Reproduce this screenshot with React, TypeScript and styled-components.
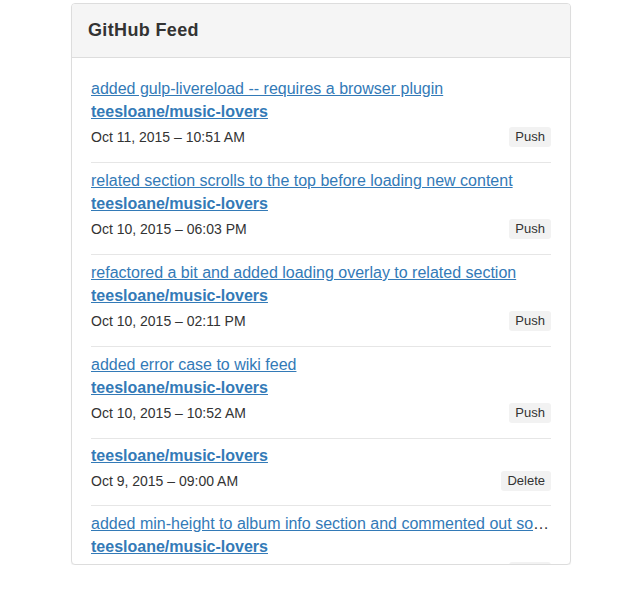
import React from "react";
import styled, { createGlobalStyle } from "styled-components";

const GlobalStyle = createGlobalStyle`
  html, body { margin: 0; padding: 0; background: #fff; }
  body { font-family: "Liberation Sans", Arial, Helvetica, sans-serif; color: #333; }
`;

const Page = styled.div`
  padding: 3px 0 0 71px;
`;

const Panel = styled.section`
  width: 498px;
  height: 560px;
  border: 1px solid #ddd;
  border-radius: 4px;
  background: #fff;
  box-shadow: 0 1px 1px rgba(0, 0, 0, 0.05);
  display: flex;
  flex-direction: column;
  overflow: hidden;
`;

const Heading = styled.header`
  height: 53px;
  flex: none;
  background: #f5f5f5;
  border-bottom: 1px solid #ddd;
  padding: 0 16px;
  display: flex;
  align-items: center;
`;

const Title = styled.h3`
  margin: 0;
  font-size: 18px;
  font-weight: bold;
  letter-spacing: 0.35px;
  color: #333;
`;

const Feed = styled.ul`
  list-style: none;
  margin: 0;
  padding: 13px 19px 0;
  flex: 1;
  overflow: hidden;
`;

const Item = styled.li<{ $compact?: boolean }>`
  padding: ${(p) => (p.$compact ? "5px 0 14px" : "6px 0 15px")};
  & + & { border-top: 1px solid #e6e6e6; }
`;

const Line = styled.div`
  font-size: 16px;
  line-height: 23px;
  white-space: nowrap;
  overflow: hidden;
  text-overflow: ellipsis;
  color: #333;
`;

const Link = styled.a<{ $bold?: boolean }>`
  color: #337ab7;
  text-decoration: underline;
  font-weight: ${(p) => (p.$bold ? "bold" : "normal")};
`;

const Meta = styled.div`
  margin-top: 4px;
  display: flex;
  align-items: center;
  justify-content: space-between;
  height: 20px;
`;

const DateText = styled.span`
  font-size: 14px;
  color: #333;
`;

const Badge = styled.span`
  font-size: 13px;
  line-height: 20px;
  padding: 0 6px;
  border-radius: 3px;
  background: #f2f2f2;
  color: #333;
`;

type Entry = { msg?: string; date: string; type: string };

const entries: Entry[] = [
  { msg: "added gulp-livereload -- requires a browser plugin", date: "Oct 11, 2015 \u2013 10:51 AM", type: "Push" },
  { msg: "related section scrolls to the top before loading new content", date: "Oct 10, 2015 \u2013 06:03 PM", type: "Push" },
  { msg: "refactored a bit and added loading overlay to related section", date: "Oct 10, 2015 \u2013 02:11 PM", type: "Push" },
  { msg: "added error case to wiki feed", date: "Oct 10, 2015 \u2013 10:52 AM", type: "Push" },
  { date: "Oct 9, 2015 \u2013 09:00 AM", type: "Delete" },
  { msg: "added min-height to album info section and commented out some unused code", date: "Oct 9, 2015 \u2013 08:41 AM", type: "Push" },
];

export default function App() {
  return (
    <>
      <GlobalStyle />
      <Page>
        <Panel>
          <Heading>
            <Title>GitHub Feed</Title>
          </Heading>
          <Feed>
            {entries.map((e, i) => (
              <Item key={i} $compact={!e.msg}>
                {e.msg && (
                  <Line>
                    <Link href="#">{e.msg}</Link>
                  </Line>
                )}
                <Line>
                  <Link href="#" $bold>teesloane/music-lovers</Link>
                </Line>
                <Meta>
                  <DateText>{e.date}</DateText>
                  <Badge>{e.type}</Badge>
                </Meta>
              </Item>
            ))}
          </Feed>
        </Panel>
      </Page>
    </>
  );
}
